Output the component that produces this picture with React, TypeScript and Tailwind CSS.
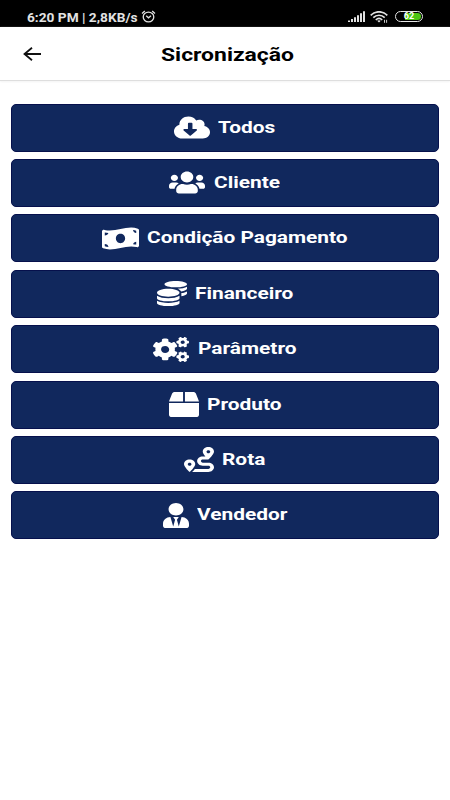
import React from 'react';
import {
  FaCloudDownloadAlt,
  FaUsers,
  FaMoneyBillWave,
  FaCoins,
  FaCogs,
  FaBox,
  FaRoute,
  FaUserTie,
} from 'react-icons/fa';

const items = [
  { label: 'Todos', Icon: FaCloudDownloadAlt, icon: 'w-[36px] h-[25px]', text: 'w-[58px]' },
  { label: 'Cliente', Icon: FaUsers, icon: 'w-[36px] h-[25px]', text: 'w-[67px]' },
  { label: 'Condição Pagamento', Icon: FaMoneyBillWave, icon: 'w-[37px] h-[25px]', text: 'w-[201px]' },
  { label: 'Financeiro', Icon: FaCoins, icon: 'w-[30px] h-[25px]', text: 'w-[98px]' },
  { label: 'Parâmetro', Icon: FaCogs, icon: 'w-[36px] h-[25px]', text: 'w-[99px]' },
  { label: 'Produto', Icon: FaBox, icon: 'w-[30px] h-[25px]', text: 'w-[74px]' },
  { label: 'Rota', Icon: FaRoute, icon: 'w-[30px] h-[25px]', text: 'w-[44px]' },
  { label: 'Vendedor', Icon: FaUserTie, icon: 'w-[26px] h-[25px]', text: 'w-[90px]' },
];

function StatusIcons() {
  return (
    <div className="flex items-center gap-[7px]">
      <svg className="-mr-[2px] h-[11px] w-[17px]" viewBox="0 0 17 11" fill="currentColor">
        <path d="M0 9.5h2V11H0zM3 8h2v3H3zM6 6.2h2V11H6zM9 4.2h2V11H9zM12 2.2h2V11h-2zM15 .2h2V11h-2z" />
      </svg>
      <svg className="h-[12px] w-[18px]" viewBox="0 0 18 12" fill="none" stroke="currentColor" strokeWidth="1.7">
        <path d="M.7 4.3C5.4-.4 12.6-.4 17.3 4.3M3.3 6.7C6.6 3.4 11.4 3.4 14.7 6.7M5.8 9C7.8 7.1 10.2 7.1 12.2 9" />
        <path d="m7.2 9.8 1.8 1.7 1.8-1.7q-1.8-1.3-3.6 0Z" fill="currentColor" stroke="none" />
        <path d="M14.5 8.8v3M16.6 8.8v3" strokeWidth=".9" />
      </svg>
      <div className="flex h-[11px] w-[28px] rounded-full border border-[#e6e6e6] p-px">
        <div className="flex h-full w-full items-center justify-center rounded-full bg-linear-to-r from-black from-[35%] to-[#4cc512] to-[35%] text-[9px] leading-none font-bold text-white">
          62
        </div>
      </div>
    </div>
  );
}

export default function App() {
  return (
    <div className="flex h-[800px] w-[450px] flex-col bg-white font-['Roboto',sans-serif]">
      <header className="flex h-[27px] items-center justify-between bg-black pt-[6px] pr-[27px] pl-[27px] text-[#e2e2e2]">
        <div className="flex items-center">
          <span className="h-[16px] w-[114px] whitespace-nowrap">
            <span className="block w-max origin-left scale-x-[1.095] text-[12.5px] leading-[17px] font-bold">6:20 PM | 2,8KB/s</span>
          </span>
          <svg className="h-[13px] w-[15px]" viewBox="0 0 15 13" fill="none" stroke="currentColor" strokeWidth="1.3">
            <ellipse cx="7.5" cy="7" rx="5.3" ry="4.9" />
            <path d="M1 3.5 3.8 1M14 3.5 11.2 1M5.2 5.8 7.5 7.8 10 5.8" />
          </svg>
        </div>
        <StatusIcons />
      </header>
      <div className="flex h-[54px] items-center border-b border-[#dedede] pl-[23px] shadow-[0_1px_2px_#f3f3f3]">
        <svg className="h-[14px] w-[19px]" viewBox="0 0 19 14" fill="none" stroke="#111" strokeWidth="1.8">
          <path d="M18 7H1.5M9 .7 1.5 7 9 13.3" />
        </svg>
        <h1 className="ml-[119px] h-[24px] w-[134px] whitespace-nowrap">
          <span className="block w-max origin-left scale-x-[1.205] text-[19px] leading-[26px] font-bold text-black">Sicronização</span>
        </h1>
      </div>
      <main className="flex flex-col gap-[7.4px] px-[11px] pt-[22.6px]">
        {items.map(({ label, Icon, icon, text }) => (
          <button key={label} className="flex h-[48px] items-center justify-center gap-[8.5px] rounded-[5px] border border-[#06104c] bg-[#11285d] text-white">
            <Icon className={icon} preserveAspectRatio="none" />
            <span className={`${text} h-[24px] text-left whitespace-nowrap`}>
              <span className="block w-max origin-left scale-x-[1.2] text-[17.4px] leading-[23.4px] font-bold">{label}</span>
            </span>
          </button>
        ))}
      </main>
    </div>
  );
}
